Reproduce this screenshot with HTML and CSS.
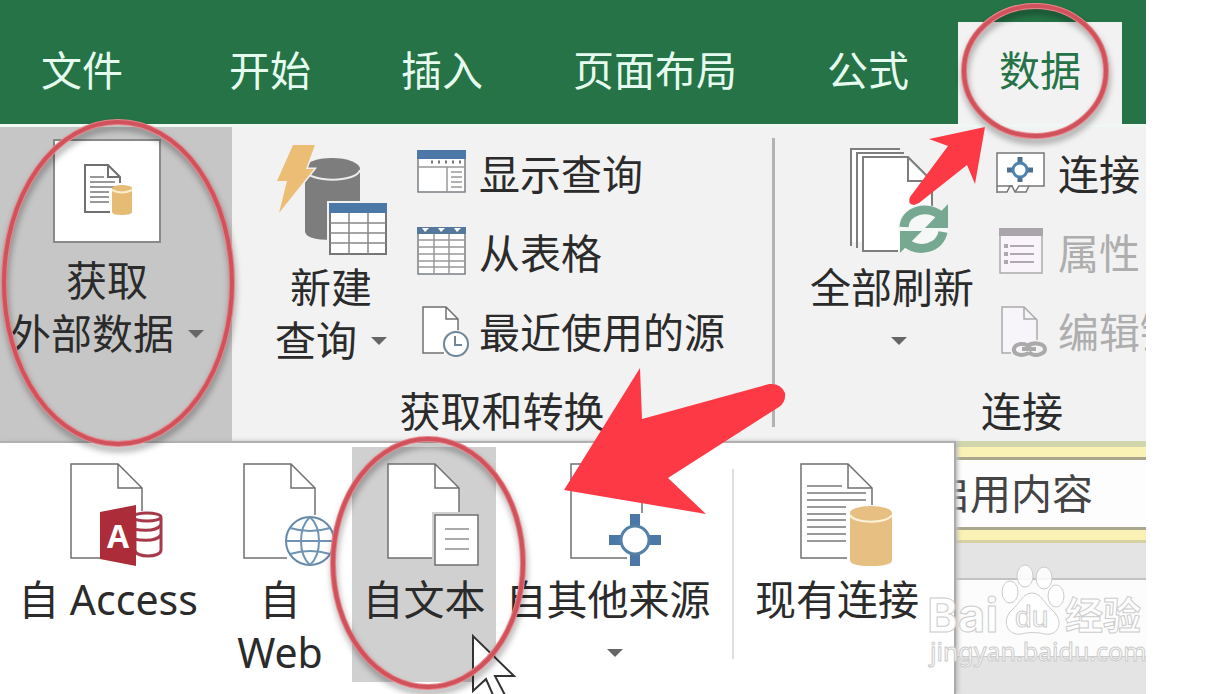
FILE: index.html
```html
<!DOCTYPE html>
<html lang="zh-CN">
<head>
<meta charset="utf-8">
<title>数据</title>
<link rel="stylesheet" href="styles.css">
</head>
<body>
<div class="app">
  <nav class="tabs">
    <button class="tab tab-file">文件</button>
    <button class="tab">开始</button>
    <button class="tab">插入</button>
    <button class="tab">页面布局</button>
    <button class="tab">公式</button>
    <button class="tab tab-active">数据</button>
  </nav>

  <div class="ribbon">
    <button class="external">
      <span class="thumb">
        <svg width="52" height="56" viewBox="0 0 52 56">
          <path d="M4 2H27L39 14V30H30V49H4Z" fill="#fff"/>
          <path d="M29 49H4V2H27L39 14V20M27 2V14H39" fill="none" stroke="#707070" stroke-width="2"/>
          <path d="M9 14H23M9 19H34M9 24H34M9 29H28M9 34H28M9 39H28" stroke="#999" stroke-width="2"/>
          <path d="M31 25V49Q31 52 41 52Q51 52 51 49V25Z" fill="#e6bb74"/>
          <ellipse cx="41" cy="25" rx="10" ry="3" fill="#e6bb74"/>
          <path d="M31 27Q41 32 51 27" fill="none" stroke="#fbeccb" stroke-width="2"/>
        </svg>
      </span>
      <span class="line">获取</span>
      <span class="line">外部数据<i class="caret"></i></span>
    </button>

    <section class="group">
      <div class="group-body">
        <button class="big">
          <svg width="112" height="112" viewBox="0 0 112 112">
            <path d="M30 25V87Q30 96 57 96Q85 96 85 87V25Z" fill="#7d7d7d"/>
            <ellipse cx="57" cy="25" rx="28" ry="11" fill="#7d7d7d"/>
            <path d="M30 26C34 39 81 39 85 26" fill="none" stroke="#ececec" stroke-width="2"/>
            <path d="M18 1H40L31 25H39L4 69L12 37H2Z" fill="#ebbd75" stroke="#f2f2f2" stroke-width="3" paint-order="stroke"/>
            <path d="M52 57H114V113H52Z" fill="#f2f2f2"/>
            <path d="M55 60H111V110H55Z" fill="#fff" stroke="#777" stroke-width="2"/>
            <path d="M54 59H112V69H54Z" fill="#4c78a8"/>
            <path d="M74 69V110M93 69V110M55 79H111M55 89H111M55 99H111" stroke="#888" stroke-width="1.5"/>
          </svg>
          <span class="line">新建</span>
          <span class="line">查询<i class="caret"></i></span>
        </button>
        <div class="list">
          <button class="item">
            <svg width="52" height="56" viewBox="0 0 52 56">
              <path d="M1 3H48V44H1Z" fill="#fff" stroke="#7b8085" stroke-width="1.5"/>
              <path d="M0 2H49V11H0Z" fill="#4c78a8"/>
              <path d="M1 19H48M30 19V44" stroke="#999" stroke-width="1.5"/>
              <path d="M14 14H48" stroke="#777" stroke-width="3" stroke-dasharray="2 5"/>
              <path d="M34 24H45M34 29H45M34 34H45M34 39H45" stroke="#999" stroke-width="1.5"/>
            </svg>
            显示查询
          </button>
          <button class="item">
            <svg width="52" height="56" viewBox="0 0 52 56">
              <path d="M1 1H48V47H1Z" fill="#fff" stroke="#7b8085" stroke-width="1.5"/>
              <path d="M0 0H49V7H0Z" fill="#55799b"/>
              <path d="M5 1H12L8 5ZM21 1H28L24 5ZM37 1H44L40 5Z" fill="#fff"/>
              <path d="M17 7V47M32 7V47M1 13H48M1 20H48M1 27H48M1 34H48M1 40H48" stroke="#999" stroke-width="1.5"/>
            </svg>
            从表格
          </button>
          <button class="item">
            <svg width="52" height="56" viewBox="0 0 52 56">
              <path d="M6 1H29L41 13V48H6Z" fill="#fff"/>
              <path d="M27 47H6V1H29L41 13V25M29 1V13H41" fill="none" stroke="#707070" stroke-width="1.5"/>
              <circle cx="39" cy="38" r="14" fill="#f2f2f2"/>
              <circle cx="39" cy="38" r="12" fill="#fff" stroke="#6f8796" stroke-width="2"/>
              <path d="M38 30V39H45" fill="none" stroke="#6f8796" stroke-width="2"/>
            </svg>
            最近使用的源
          </button>
        </div>
      </div>
      <div class="group-label">获取和转换</div>
    </section>

    <div class="divider"></div>

    <section class="group group-connect">
      <div class="group-body">
        <button class="big">
          <svg width="112" height="112" viewBox="0 0 112 112">
            <path d="M15 5H64V98H15Z" fill="#fff"/>
            <path d="M15 102V5H64M21 104V9H68" fill="none" stroke="#7d7d7d" stroke-width="2"/>
            <path d="M27 13H71L96 38V107H27Z" fill="#fff" stroke="#f2f2f2" stroke-width="2"/>
            <path d="M62 107H27V13H72L96 37V62M72 13V37H96" fill="none" stroke="#7d7d7d" stroke-width="2"/>
            <circle cx="87" cy="85" r="25" fill="#f6f8f7"/>
            <path d="M68 83C69 67 91 60 105 72" fill="none" stroke="#76a892" stroke-width="9"/>
            <path d="M112 60V84H89Z" fill="#76a892"/>
            <path d="M107 88C104 104 83 110 69 98" fill="none" stroke="#76a892" stroke-width="9"/>
            <path d="M64 109V87H86Z" fill="#76a892"/>
          </svg>
          <span class="line">全部刷新</span>
          <span class="line caret-line"><i class="caret"></i></span>
        </button>
        <div class="list">
          <button class="item">
            <svg width="52" height="56" viewBox="0 0 52 56">
              <path d="M1 45V5H48V38H33L30 44H19L16 38H14L11 44H1" fill="#fff" stroke="#777" stroke-width="1.5"/>
              <path d="M1 38H17M19 44L23 38H33" fill="none" stroke="#777" stroke-width="1.5"/>
              <path d="M24 9V34M11 22H37" stroke="#4f6f8e" stroke-width="5"/>
              <circle cx="24" cy="22" r="7" fill="#fff" stroke="#4c82b0" stroke-width="3"/>
            </svg>
            连接
          </button>
          <button class="item" disabled>
            <svg width="52" height="56" viewBox="0 0 52 56">
              <path d="M4 2H46V46H4Z" fill="#f8f4f9" stroke="#aaa" stroke-width="1.5"/>
              <path d="M3 1H47V9H3Z" fill="#aaa5aa"/>
              <path d="M14 19H38M14 27H38M14 35H38" stroke="#b0a8b2" stroke-width="2"/>
              <path d="M8 19H12M8 27H12M8 35H12" stroke="#aaa" stroke-width="4"/>
            </svg>
            属性
          </button>
          <button class="item" disabled>
            <svg width="52" height="56" viewBox="0 0 52 56">
              <path d="M6 1H28L41 14V48H6Z" fill="#f8f5fa"/>
              <path d="M15 47H6V1H28L41 14V34M28 1V13H41" fill="none" stroke="#aaa" stroke-width="1.5"/>
              <path d="M33 47C25 51 17 48 18 43C19 37 30 36 34 42M31 40C38 35 49 38 49 43C49 48 38 52 33 46M26 43H40" fill="none" stroke="#aaa" stroke-width="4"/>
            </svg>
            编辑链接
          </button>
        </div>
      </div>
      <div class="group-label">连接</div>
    </section>
  </div>

  <main class="sheet">
    <div class="message-bar"><button class="enable">启用内容</button></div>
    <div class="formula-gap"></div>
    <div class="formula-row"></div>

    <div class="menu">
      <button class="source source-wide">
        <svg width="110" height="104" viewBox="0 0 110 104">
          <path d="M47 95H18V1H65L89 25V48M65 1V25H89" fill="#fff" stroke="#707070" stroke-width="1.5"/>
          <path d="M82 55V87C82 95 108 95 108 87V55" fill="#fff" stroke="#a63a4b" stroke-width="3"/>
          <ellipse cx="94" cy="54" rx="14" ry="4" fill="#fff" stroke="#a63a4b" stroke-width="3"/>
          <path d="M80 66Q102 70 108 62M80 76Q102 80 108 72" fill="none" stroke="#a63a4b" stroke-width="3"/>
          <path d="M47 49L83 42V103L47 96Z" fill="#ac2c39"/>
          <text class="access-letter" x="65" y="85" text-anchor="middle">A</text>
        </svg>
        <span class="line">自 Access</span>
      </button>
      <button class="source">
        <svg width="110" height="104" viewBox="0 0 110 104">
          <path d="M62 95H19V1H66L90 25V52M66 1V25H90" fill="#fff" stroke="#707070" stroke-width="1.5"/>
          <circle cx="85" cy="78" r="24" fill="#fff" stroke="#6689a8" stroke-width="2"/>
          <path d="M61 78H109M65 65Q85 71 105 65M65 91Q85 85 105 91M85 54C73 65 73 91 85 102M85 54C97 65 97 91 85 102" fill="none" stroke="#6f94b3" stroke-width="2"/>
        </svg>
        <span class="line">自</span>
        <span class="line">Web</span>
      </button>
      <button class="source source-hover">
        <svg width="110" height="104" viewBox="0 0 110 104">
          <path d="M19 1H66L90 25V95H19Z" fill="#fff"/>
          <path d="M63 95H19V1H66L90 25V50M66 1V25H90" fill="none" stroke="#707070" stroke-width="1.5"/>
          <path d="M63 49H110V104H63Z" fill="#d0d0d0"/>
          <path d="M66 52H109V102H66Z" fill="#fff" stroke="#707070" stroke-width="1.5"/>
          <path d="M76 66H100M76 76H100M76 86H100" stroke="#aaa" stroke-width="2"/>
        </svg>
        <span class="line">自文本</span>
      </button>
      <button class="source source-other">
        <svg width="110" height="104" viewBox="0 0 110 104">
          <path d="M74 95H18V1H65L89 25V50M65 1V25H89" fill="#fff" stroke="#707070" stroke-width="1.5"/>
          <path d="M82 51V103M56 77H108" stroke="#4c78a8" stroke-width="10"/>
          <circle cx="82" cy="77" r="14" fill="#fff" stroke="#5580a8" stroke-width="3"/>
        </svg>
        <span class="line">自其他来源</span>
        <span class="line caret-line"><i class="caret"></i></span>
      </button>
      <div class="menu-divider"></div>
      <button class="source source-wide">
        <svg width="110" height="104" viewBox="0 0 110 104">
          <path d="M65 95H19V1H66L90 25V42M66 1V25H90" fill="#fff" stroke="#707070" stroke-width="1.5"/>
          <path d="M25 23H60M25 30H84M25 37H84M25 44H64M25 51H64M25 57H64M25 64H64M25 71H64M25 78H64" stroke="#999" stroke-width="2"/>
          <path d="M68 50V97Q68 103 89 103Q110 103 110 97V50Z" fill="#e7bf83"/>
          <ellipse cx="89" cy="50" rx="21" ry="7" fill="#e7bf83"/>
          <path d="M68 52C72 61 106 61 110 52" fill="none" stroke="#fff3dc" stroke-width="2"/>
        </svg>
        <span class="line">现有连接</span>
      </button>
    </div>
  </main>

  <svg class="overlay" viewBox="0 0 1146 694" width="1146" height="694">
    <path d="M473 636V691L486 679L496 702L506 697L495 676H514Z" fill="#fff" stroke="#333" stroke-width="2"/>
    <g class="rings">
      <ellipse class="ring-glow" cx="118" cy="283" rx="114" ry="161"/>
      <ellipse class="ring-glow" cx="1035" cy="71" rx="71" ry="65"/>
      <ellipse class="ring-glow" cx="428" cy="563" rx="95" ry="124"/>
    </g>
    <g>
      <ellipse class="ring" cx="118" cy="283" rx="114" ry="161"/>
      <ellipse class="ring" cx="1035" cy="71" rx="71" ry="65"/>
      <ellipse class="ring" cx="428" cy="563" rx="95" ry="124"/>
    </g>
    <path d="M564 490L640 368L642 419L769 384Q781 383 785 393Q786 402 779 407L668 478L706 514Z" fill="#fd3945"/>
    <path d="M985 127L929 139L948 146L910 197Q907 204 914 205L919 203L967 165L975 184Z" fill="#fd3945"/>
    <g class="watermark">
      <ellipse cx="1010" cy="592" rx="8" ry="11"/>
      <ellipse cx="1025" cy="576" rx="8" ry="11"/>
      <ellipse cx="1044" cy="578" rx="8" ry="11"/>
      <ellipse cx="1056" cy="596" rx="8" ry="11"/>
      <path d="M1032 593C1041 593 1044 603 1052 610C1064 620 1060 636 1045 634C1036 632 1029 632 1021 634C1007 636 1001 620 1012 610C1020 603 1023 593 1032 593Z"/>
      <text class="wm-bai" x="927" y="632">Bai</text>
      <text class="wm-du" x="1015" y="627">du</text>
      <text class="wm-cn" x="1065" y="629">经验</text>
      <text class="wm-url" x="930" y="661">jingyan.baidu.com</text>
    </g>
  </svg>
</div>
</body>
</html>
```
FILE: styles.css
```css
* { box-sizing: border-box; }

body {
  margin: 0;
  background: #fff;
  font-family: "Noto Sans", "Noto Sans CJK SC", sans-serif;
  font-size: 41px;
  line-height: 53px;
  color: #2b2b2b;
}

button {
  border: 0;
  padding: 0;
  background: none;
  color: inherit;
  font: inherit;
  white-space: nowrap;
}

svg { display: block; flex: none; }

.app {
  position: relative;
  display: flex;
  flex-direction: column;
  height: 100vh;
  margin-right: 62px;
  overflow: hidden;
}

.tabs {
  display: flex;
  align-items: flex-end;
  gap: 8px;
  padding-top: 22px;
  background: #257346;
}

.tab {
  padding: 22px 41px 27px;
  color: #e6fbef;
}

.tab-file { margin-right: 16px; }

.tab-active {
  background: #f2f2f2;
  color: #257346;
}

.ribbon {
  display: flex;
  border-top: 3px solid #eff8f2;
  background: #f2f2f2;
  overflow: hidden;
}

.external {
  display: flex;
  flex: none;
  flex-direction: column;
  align-items: center;
  width: 232px;
  padding: 12px 18px 0 0;
  background: #c6c6c6;
}

.thumb {
  display: flex;
  align-items: center;
  justify-content: center;
  width: 108px;
  height: 104px;
  margin-bottom: 11px;
  border: 2px solid #8a8a8a;
  background: #fff;
}

.line {
  display: flex;
  align-items: center;
  justify-content: center;
  gap: 14px;
}

.caret {
  border: 8px solid transparent;
  border-top-color: #666;
  border-bottom-width: 0;
}

.group {
  display: flex;
  flex: none;
  flex-direction: column;
  padding-right: 47px;
}

.group-body {
  display: flex;
  padding: 8px 0 0 13px;
}

.big {
  display: flex;
  flex-direction: column;
  align-items: center;
  width: 172px;
  padding-top: 9px;
}

.big svg { margin-bottom: 5px; }

.caret-line {
  height: 53px;
  padding-left: 14px;
}

.list {
  display: flex;
  flex-direction: column;
}

.item {
  display: flex;
  align-items: center;
  gap: 10px;
  height: 79px;
}

.item:disabled { color: #aeaeae; }

.item svg { margin-top: 2px; }

.group-label {
  padding-top: 10px;
  line-height: 59px;
  text-align: center;
}

.group > .group-label { margin-right: -47px; }

.group-connect .big { width: 208px; }

.divider {
  flex: none;
  width: 3px;
  margin: 11px 0 14px;
  background: #b3b3b3;
}

.sheet {
  position: relative;
  flex: 1;
  background: #e4e4e4;
}

.message-bar {
  border-top: 6px solid #d0d5ac;
  border-bottom: 3px solid #d5d1a2;
  padding: 10px 0;
  background: #faf2b4;
}

.enable {
  width: 100%;
  padding: 7px 0 7px 929px;
  border-top: 3px solid #aaa68d;
  border-bottom: 3px solid #aaa68d;
  background: #fdfdfd;
  color: #444;
  text-align: left;
}

.formula-gap { height: 35px; }

.formula-row {
  height: 79px;
  border-top: 2px solid #c2c2c2;
  border-bottom: 1px solid #ccc;
  background: #fcfcfc;
}

.menu {
  position: absolute;
  top: 0;
  left: 0;
  bottom: 0;
  display: flex;
  align-items: flex-start;
  padding: 4px 17px 0 8px;
  border-top: 2px solid #b0b0b0;
  border-right: 2px solid #aaa;
  background: #fff;
  box-shadow: 2px 0 4px #bbb;
}

.source {
  display: flex;
  flex-direction: column;
  align-items: center;
  width: 144px;
  height: 235px;
  padding-top: 16px;
}

.source svg { margin-bottom: 6px; }

.source-wide { width: 200px; }

.source-hover { background: #d0d0d0; }

.source-other { width: 224px; }

.menu-divider {
  width: 2px;
  height: 190px;
  margin: 22px 3px 0 12px;
  background: #dedede;
}

.access-letter {
  fill: #fff;
  font-family: "Open Sans", sans-serif;
  font-size: 32px;
  font-weight: 700;
}

.overlay {
  position: absolute;
  top: 0;
  left: 0;
  pointer-events: none;
}

.rings { filter: drop-shadow(1px 5px 3px #0005); }

.ring,
.ring-glow { fill: none; }

.ring {
  stroke: #cf525c;
  stroke-width: 4px;
}

.ring-glow {
  stroke: #e9858a;
  stroke-width: 6px;
}

.watermark {
  fill: #fff;
  fill-opacity: 0.85;
  stroke: #ccc;
  stroke-width: 1px;
}

.wm-bai {
  font-family: Inter, sans-serif;
  font-size: 47px;
  font-weight: 700;
}

.wm-du {
  font-family: "Liberation Sans", sans-serif;
  font-size: 30px;
}

.wm-cn {
  font-family: "Noto Sans CJK SC", sans-serif;
  font-size: 38px;
  font-weight: 700;
}

.wm-url {
  font-size: 25px;
}
```
